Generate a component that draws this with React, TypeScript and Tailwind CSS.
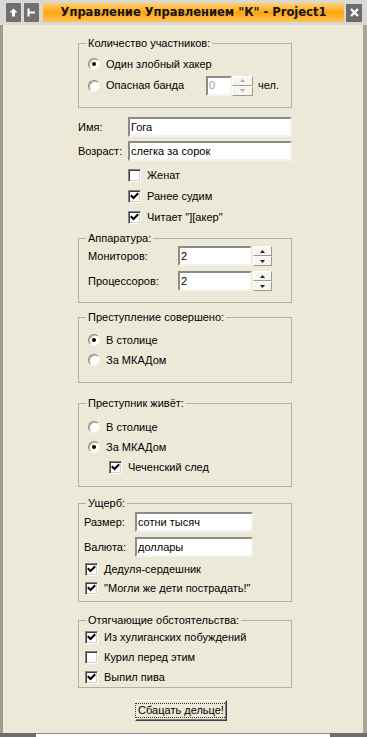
import type { ReactNode } from 'react';

function Radio({ checked, label }: { checked?: boolean; label: string }) {
  return (
    <div className="flex h-[20px] items-center gap-[6px]">
      <span className="flex h-[12px] w-[12px] items-center justify-center rounded-full border border-t-[#8a887c] border-l-[#8a887c] border-b-[#f4f3ee] border-r-[#f4f3ee] bg-white shadow-[inset_1px_1px_0_#b9b7aa]">
        {checked && <span className="h-[4px] w-[4px] rounded-full bg-black" />}
      </span>
      <span>{label}</span>
    </div>
  );
}

function Check({ checked, label, h = 'h-[20px]' }: { checked?: boolean; label: string; h?: string }) {
  return (
    <div className={`flex ${h} items-center gap-[6px]`}>
      <span className="flex h-[13px] w-[13px] items-center justify-center border border-t-[#848284] border-l-[#848284] border-b-white border-r-white bg-white shadow-[inset_1px_1px_0_#404040,inset_-1px_-1px_0_#d4d0c8]">
        {checked && (
          <svg width="9" height="9" viewBox="0 0 9 9">
            <polyline points="1.5,4 3.5,6 7.5,2" fill="none" stroke="black" strokeWidth="2" strokeLinecap="square" />
          </svg>
        )}
      </span>
      <span>{label}</span>
    </div>
  );
}

function Field({ value, w, disabled }: { value: string; w: string; disabled?: boolean }) {
  return (
    <div
      className={`flex h-[20px] ${w} items-center border-2 border-t-[#8c8b85] border-l-[#8c8b85] border-b-[#f4f3ee] border-r-[#f4f3ee] bg-white pl-[1px] ${
        disabled ? 'text-[#a0a0a0]' : 'text-black'
      }`}
    >
      {value}
    </div>
  );
}

function SpinBtn({ up, disabled }: { up?: boolean; disabled?: boolean }) {
  return (
    <div className="flex flex-1 items-center justify-center border border-t-white border-l-white border-b-[#9d9b8f] border-r-[#9d9b8f] bg-[#f6f5f0]">
      <svg width="5" height="3" viewBox="0 0 5 3">
        <path d={up ? 'M2.5 0 L5 3 L0 3 Z' : 'M0 0 L5 0 L2.5 3 Z'} fill={disabled ? '#a8a8a8' : '#222'} />
      </svg>
    </div>
  );
}

function Spinner({ w = 'w-[19px]', disabled }: { w?: string; disabled?: boolean }) {
  return (
    <div className={`flex h-[20px] ${w} flex-col`}>
      <SpinBtn up disabled={disabled} />
      <SpinBtn disabled={disabled} />
    </div>
  );
}

function Group({ title, className, children }: { title: string; className: string; children: ReactNode }) {
  return (
    <fieldset className={`ml-[75px] w-[214px] border border-[#b2b0a2] ${className}`}>
      <legend className="ml-[7px] px-[2px] leading-[13px]">{title}</legend>
      {children}
    </fieldset>
  );
}

export default function App() {
  return (
    <div className="flex h-[737px] w-[367px] flex-col overflow-hidden bg-[#ece9d8] font-['Liberation_Sans',Arial,sans-serif] text-[11px] text-black">
      {/* заголовок окна */}
      <div className="flex h-[25px] shrink-0 items-center bg-[#d9d8d4] pl-[6px] pr-[5px]">
        <div className="flex h-[19px] w-[15px] items-center justify-center rounded-[1px] bg-[#707070]">
          <svg width="9" height="9" viewBox="0 0 9 9">
            <path d="M4.5 0.5 L8.5 4.5 L6 4.5 L6 8.5 L3 8.5 L3 4.5 L0.5 4.5 Z" fill="white" />
          </svg>
        </div>
        <div className="ml-[3px] flex h-[19px] w-[15px] items-center justify-center rounded-[1px] bg-[#707070]">
          <svg width="9" height="9" viewBox="0 0 9 9">
            <path d="M1.5 0.5 V8.5 M1.5 4.5 H8" stroke="white" strokeWidth="2" />
          </svg>
        </div>
        <div className="ml-[4px] flex h-[19px] flex-1 items-center justify-center bg-linear-to-b from-[#ffd36b] via-[#ffa400] to-[#ffc452] font-['DejaVu_Sans',Verdana,sans-serif] text-[11.5px] font-bold text-[#151515]">
          Управление Управлением "К" - Project1
        </div>
        <div className="ml-[2px] flex h-[18px] w-[16px] items-center justify-center rounded-[1px] bg-[#6c6c6c]">
          <svg width="9" height="9" viewBox="0 0 9 9">
            <path d="M1 1 L8 8 M8 1 L1 8" stroke="white" strokeWidth="2.2" />
          </svg>
        </div>
      </div>

      {/* тело формы */}
      <div className="flex flex-1 flex-col border-l-[3px] border-r-[4px] border-l-[#a09e92] border-r-[#a8a69a]">
        <Group title="Количество участников:" className="mt-[12px]">
          <div className="pb-[11px] pl-[9px] pt-[4px]">
            <div className="h-[21px]">
              <Radio checked label="Один злобный хакер" />
            </div>
            <div className="flex h-[21px] items-center">
              <div className="w-[118px]">
                <Radio label="Опасная банда" />
              </div>
              <Field value="0" w="w-[26px]" disabled />
              <Spinner w="w-[21px]" disabled />
              <span className="ml-[5px]">чел.</span>
            </div>
          </div>
        </Group>

        <div className="ml-[75px] mt-[9px] flex flex-col gap-[4px]">
          <div className="flex items-center">
            <span className="w-[50px]">Имя:</span>
            <Field value="Гога" w="w-[164px]" />
          </div>
          <div className="flex items-center">
            <span className="w-[50px]">Возраст:</span>
            <Field value="слегка за сорок" w="w-[164px]" />
          </div>
        </div>

        <div className="ml-[125px] mt-[4px]">
          <Check label="Женат" h="h-[21px]" />
          <Check checked label="Ранее судим" h="h-[21px]" />
          <Check checked label={'Читает "][акер"'} h="h-[21px]" />
        </div>

        <Group title="Аппаратура:" className="mt-[4px]">
          <div className="flex flex-col gap-[5px] pb-[11px] pl-[9px] pt-[1px]">
            <div className="flex items-center">
              <span className="w-[90px]">Мониторов:</span>
              <Field value="2" w="w-[74px]" />
              <div className="ml-[1px]">
                <Spinner />
              </div>
            </div>
            <div className="flex items-center">
              <span className="w-[90px]">Процессоров:</span>
              <Field value="2" w="w-[74px]" />
              <div className="ml-[1px]">
                <Spinner />
              </div>
            </div>
          </div>
        </Group>

        <Group title="Преступление совершено:" className="mt-[8px]">
          <div className="pb-[12px] pl-[9px] pt-[6px]">
            <Radio checked label="В столице" />
            <Radio label="За МКАДом" />
          </div>
        </Group>

        <Group title="Преступник живёт:" className="mt-[14px]">
          <div className="pb-[9px] pl-[9px] pt-[7px]">
            <Radio label="В столице" />
            <Radio checked label="За МКАДом" />
            <div className="ml-[21px]">
              <Check checked label="Чеченский след" />
            </div>
          </div>
        </Group>

        <Group title="Ущерб:" className="mt-[10px]">
          <div className="pb-[3px] pl-[5px] pt-[2px]">
            <div className="flex flex-col gap-[5px]">
              <div className="flex items-center">
                <span className="w-[51px]">Размер:</span>
                <Field value="сотни тысяч" w="w-[118px]" />
              </div>
              <div className="flex items-center">
                <span className="w-[51px]">Валюта:</span>
                <Field value="доллары" w="w-[118px]" />
              </div>
            </div>
            <div className="ml-[1px] mt-[3px]">
              <Check checked label="Дедуля-сердешник" h="h-[19px]" />
              <Check checked label={'"Могли же дети пострадать!"'} h="h-[19px]" />
            </div>
          </div>
        </Group>

        <Group title="Отягчающие обстоятельства:" className="mt-[12px]">
          <div className="pl-[6px]">
            <Check checked label="Из хулиганских побуждений" />
            <Check label="Курил перед этим" />
            <Check checked label="Выпил пива" />
          </div>
        </Group>

        <div className="ml-[132px] mt-[12px] flex h-[21px] w-[92px] items-center justify-center border border-t-white border-l-white border-b-[#404040] border-r-[#404040] bg-[#ece9d8] shadow-[inset_-1px_-1px_0_#808080]">
          <div className="flex h-[15px] items-center justify-center whitespace-nowrap border border-dotted border-[#333] px-[2px]">
            Сбацать дельце!
          </div>
        </div>
      </div>

      <div className="flex h-[4px] shrink-0">
        <div className="w-[36px] bg-[#6e6e6a]" />
        <div className="flex-1 border-t border-t-[#8a8a86] bg-white" />
        <div className="w-[37px] bg-[#6e6e6a]" />
      </div>
    </div>
  );
}
